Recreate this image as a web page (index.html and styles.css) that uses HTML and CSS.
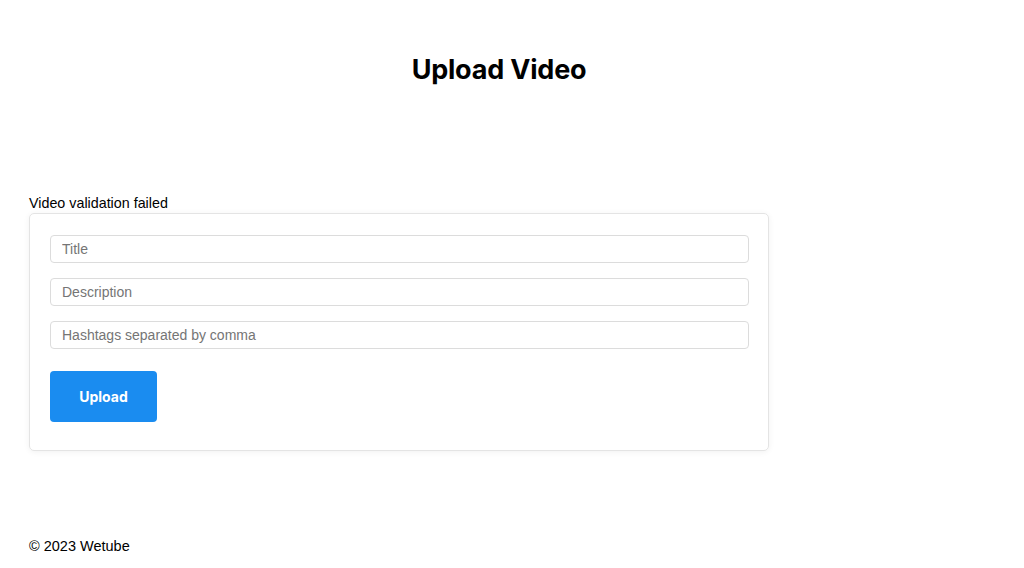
FILE: index.html
```html
<!DOCTYPE html>
<html lang="en">
<head>
<meta charset="utf-8">
<title>Upload Video | Wetube</title>
<link rel="stylesheet" href="styles.css">
</head>
<body>
<header class="page-header">
  <h1 class="page-title">Upload Video</h1>
</header>
<main class="content">
  <span class="error-message">Video validation failed</span>
  <form class="upload-form">
    <input class="field" type="text" placeholder="Title">
    <input class="field" type="text" placeholder="Description">
    <input class="field" type="text" placeholder="Hashtags separated by comma">
    <button class="submit" type="button">Upload</button>
  </form>
</main>
<footer class="page-footer">&copy; 2023 Wetube</footer>
</body>
</html>
```
FILE: styles.css
```css
* { box-sizing: border-box; }
html, body { margin: 0; padding: 0; background: #fff; }
body {
  font-family: "Liberation Sans", Arial, sans-serif;
  color: #000;
  width: 1024px;
  height: 568px;
  display: flex;
  flex-direction: column;
}
.page-header {
  display: flex;
  justify-content: center;
  padding: 53px 26px 0 0;
  height: 190px;
}
.page-title {
  margin: 0;
  font-family: Inter, "Liberation Sans", sans-serif;
  font-size: 27px;
  font-weight: 700;
  line-height: 34px;
  letter-spacing: -0.2px;
}
.content {
  padding: 0 29px;
  display: flex;
  flex-direction: column;
}
.error-message {
  font-size: 14.3px;
  line-height: 17px;
  margin-top: 5px;
  margin-bottom: 1px;
}
.upload-form {
  width: 740px;
  border: 1px solid #e4e4e4;
  border-radius: 5px;
  box-shadow: 0 1px 6px rgba(0,0,0,0.06);
  padding: 21px 19px 28px 20px;
  display: flex;
  flex-direction: column;
  gap: 15px;
  align-items: flex-start;
}
.field {
  width: 699px;
  height: 28px;
  border: 1px solid #dcdcdc;
  border-radius: 4px;
  padding: 0 11px;
  font-family: "Liberation Sans", Arial, sans-serif;
  font-size: 14px;
  color: #333;
  outline: none;
}
.field::placeholder { color: #757575; }
.submit {
  margin-top: 7px;
  width: 107px;
  height: 51px;
  border: none;
  border-radius: 4px;
  background: #1a8cf0;
  color: #fff;
  font-family: Inter, "Liberation Sans", sans-serif;
  font-size: 14px;
  font-weight: 700;
}
.page-footer {
  margin-top: auto;
  padding: 0 29px 13px;
  font-size: 14.5px;
  line-height: 17px;
}
```
